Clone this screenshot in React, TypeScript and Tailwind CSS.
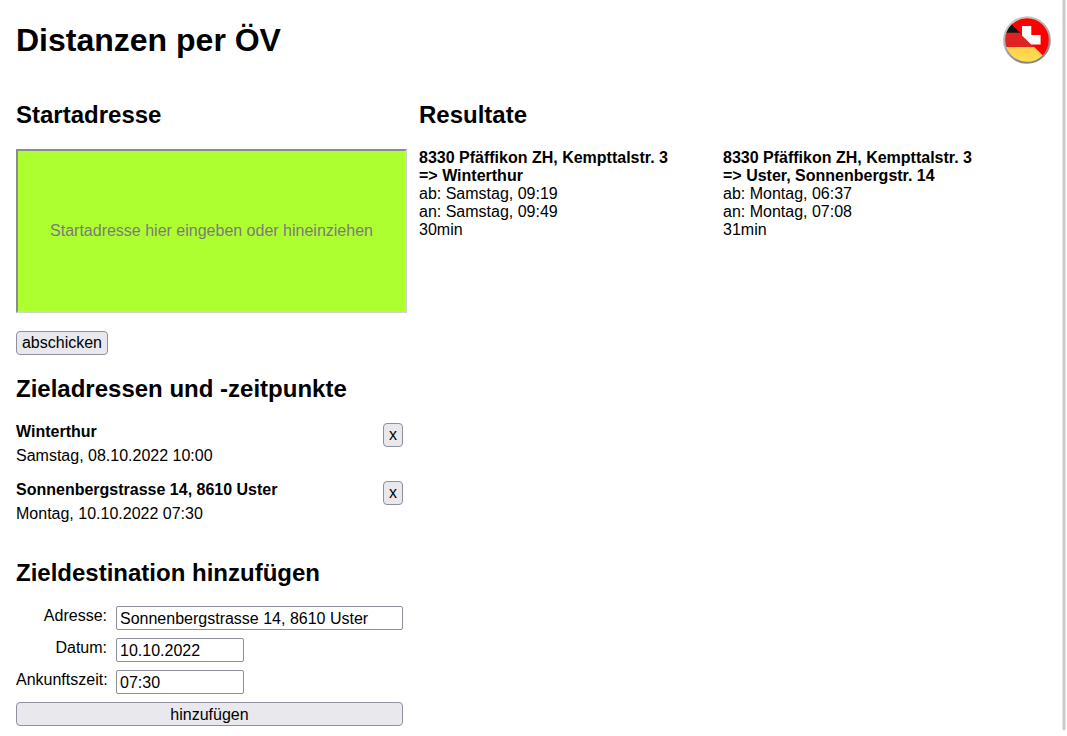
import type { ReactNode } from "react";

const results = [
  { from: "8330 Pfäffikon ZH, Kempttalstr. 3", to: "Winterthur", dep: "Samstag, 09:19", arr: "Samstag, 09:49", time: "30min" },
  { from: "8330 Pfäffikon ZH, Kempttalstr. 3", to: "Uster, Sonnenbergstr. 14", dep: "Montag, 06:37", arr: "Montag, 07:08", time: "31min" },
];

const targets = [
  { name: "Winterthur", when: "Samstag, 08.10.2022 10:00" },
  { name: "Sonnenbergstrasse 14, 8610 Uster", when: "Montag, 10.10.2022 07:30" },
];

const button = "h-6 rounded border border-[#8f8f9d] bg-[#e9e9ed] text-center leading-[22px]";
const input = "h-6 rounded-[2px] border border-[#8f8f9d] bg-white px-[3px] pt-0.5 leading-5";
const label = "pt-px text-right whitespace-nowrap";

function Heading({ children }: { children: ReactNode }) {
  return <h2 className="text-2xl leading-[27px] font-bold">{children}</h2>;
}

function Logo() {
  return (
    <svg className="size-12" viewBox="0 0 48 48" role="img" aria-label="Sprache">
      <defs>
        <clipPath id="disc">
          <circle cx="24" cy="24" r="22.6" />
        </clipPath>
        <linearGradient id="gold" x1="0" y1="0" x2="0" y2="1">
          <stop offset="0" stopColor="#ffd04b" />
          <stop offset="1" stopColor="#ffe052" />
        </linearGradient>
        <linearGradient id="rim" x1="0" y1="0" x2="0.4" y2="1">
          <stop offset="0" stopColor="#d0d0d0" />
          <stop offset="0.5" stopColor="#b2b2b2" />
          <stop offset="1" stopColor="#858585" />
        </linearGradient>
      </defs>
      <g clipPath="url(#disc)">
        <path fill="#f00" d="M0 0h48v48H0z" />
        <path fill="#141414" d="M0 0l17.5 17H0z" />
        <path fill="#df2323" d="M0 16.7h16.5L31.3 31H0z" />
        <path fill="url(#gold)" d="M0 31h31.3L48 47.7V48H0z" />
        <path fill="#fff" d="M19 10H28.3v9h9.3v9.5h-9.4L19 19.5z" />
      </g>
      <circle cx="24" cy="24" r="22.8" fill="none" stroke="url(#rim)" strokeWidth="2.1" />
    </svg>
  );
}

export default function App() {
  return (
    <div className="flex h-[736px] w-[1067px] items-start overflow-hidden bg-white font-['Liberation_Sans',Arial,sans-serif] text-base leading-[18px] text-black">
      <main className="h-[736px] w-[1062px] pl-4">
        <header className="flex h-[101px] items-start justify-between pt-4 pr-[11px]">
          <h1 className="mt-[6px] text-[32px] leading-9 font-bold">Distanzen per ÖV</h1>
          <Logo />
        </header>
        <div className="flex">
          <div className="w-[403px]">
            <section>
              <Heading>Startadresse</Heading>
              <textarea
                className="mt-[21px] block h-[164px] w-[391px] resize-none overflow-hidden border-2 border-t-[#8c8c8c] border-r-[#d2d2d2] border-b-[#d2d2d2] border-l-[#8c8c8c] bg-[#adff2f] px-0 pt-[71px] text-center leading-[18px] placeholder:text-[#7b7b7b]"
                placeholder="Startadresse hier eingeben oder hineinziehen"
              />
              <button className={`${button} mt-[18px] block w-[92px]`}>abschicken</button>
            </section>
            <section className="mt-5 w-[387px]">
              <Heading>Zieladressen und -zeitpunkte</Heading>
              <ul className="mt-5">
                {targets.map((t) => (
                  <li key={t.name} className="flex h-[58px] justify-between">
                    <div className="leading-6">
                      <p className="-mt-0.5 font-bold">{t.name}</p>
                      <p>{t.when}</p>
                    </div>
                    <button className={`${button} mt-px w-5`}>x</button>
                  </li>
                ))}
              </ul>
            </section>
            <section className="mt-[21px] w-[387px]">
              <Heading>Zieldestination hinzufügen</Heading>
              <form className="mt-5 grid grid-cols-[91px_287px] gap-x-[9px] gap-y-2">
                <label htmlFor="adresse" className={label}>Adresse:</label>
                <input id="adresse" className={`${input} w-full`} defaultValue="Sonnenbergstrasse 14, 8610 Uster" />
                <label htmlFor="datum" className={label}>Datum:</label>
                <input id="datum" className={`${input} w-32`} defaultValue="10.10.2022" />
                <label htmlFor="zeit" className={label}>Ankunftszeit:</label>
                <input id="zeit" className={`${input} w-32`} defaultValue="07:30" />
                <button type="button" className={`${button} col-span-2 pt-px`}>hinzufügen</button>
              </form>
            </section>
          </div>
          <section>
            <Heading>Resultate</Heading>
            <div className="mt-[21px] grid grid-cols-[304px_304px]">
              {results.map((r) => (
                <article key={r.to}>
                  <p className="font-bold">{r.from}</p>
                  <p className="font-bold">=&gt; {r.to}</p>
                  <p>ab: {r.dep}</p>
                  <p>an: {r.arr}</p>
                  <p>{r.time}</p>
                </article>
              ))}
            </div>
          </section>
        </div>
      </main>
      <div className="h-[730px] w-1 border-x border-[#e6e6e6] bg-[#cacaca]" />
    </div>
  );
}
